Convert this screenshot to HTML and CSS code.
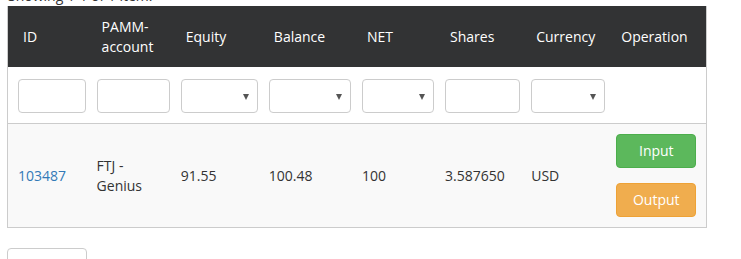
FILE: index.html
```html
<!DOCTYPE html>
<html>
<head>
<meta charset="utf-8">
<link rel="stylesheet" href="styles.css">
</head>
<body>
<div class="page">
  <div class="summary">Showing <b>1-1</b> of <b>1</b> item.</div>
  <table class="grid">
    <colgroup>
      <col class="c-id"><col class="c-pamm"><col class="c-eq"><col class="c-bal"><col class="c-net"><col class="c-sh"><col class="c-cur"><col class="c-op">
    </colgroup>
    <thead>
      <tr class="head">
        <th>ID</th><th>PAMM-account</th><th>Equity</th><th>Balance</th><th>NET</th><th>Shares</th><th>Currency</th><th>Operation</th>
      </tr>
      <tr class="filters">
        <td><div class="field"></div></td>
        <td><div class="field"></div></td>
        <td><div class="field select"><span class="caret"></span></div></td>
        <td><div class="field select"><span class="caret"></span></div></td>
        <td><div class="field select"><span class="caret"></span></div></td>
        <td><div class="field"></div></td>
        <td><div class="field select"><span class="caret"></span></div></td>
        <td></td>
      </tr>
    </thead>
    <tbody>
      <tr class="row">
        <td><a class="link" href="#">103487</a></td>
        <td>FTJ -<br>Genius</td>
        <td>91.55</td>
        <td>100.48</td>
        <td>100</td>
        <td>3.587650</td>
        <td>USD</td>
        <td>
          <div class="ops">
            <button class="btn btn-input">Input</button>
            <button class="btn btn-output">Output</button>
          </div>
        </td>
      </tr>
    </tbody>
  </table>
  <div class="after"><button class="btn btn-default"></button></div>
</div>
</body>
</html>
```
FILE: styles.css
```css
html, body {
  margin: 0;
  padding: 0;
  background: #fff;
  overflow: hidden;
}
body {
  font-family: "Open Sans", "Liberation Sans", sans-serif;
  font-size: 14px;
  line-height: 20px;
  color: #333;
}
.page {
  padding: 0 34px 0 7px;
}
.summary {
  margin-top: -14px;
  height: 20px;
  padding-left: 1px;
}
.summary b { font-weight: normal; }
.grid {
  width: 700px;
  table-layout: fixed;
  border-collapse: collapse;
  border-left: 1px solid #ccc;
  border-right: 1px solid #ccc;
  border-bottom: 1px solid #ccc;
}
.c-id { width: 79px; }
.c-pamm { width: 84px; }
.c-eq { width: 88px; }
.c-bal { width: 93px; }
.c-net { width: 83px; }
.c-sh { width: 86px; }
.c-cur { width: 85px; }
.c-op { width: 100px; }
.head th {
  background: #323334;
  color: #fff;
  font-weight: normal;
  text-align: left;
  padding: 11px 1px 10px 15px;
  vertical-align: middle;
}
.filters td {
  padding: 12px 1px 10px 10px;
  background: #fff;
  border-bottom: 1px solid #ccc;
}
.field {
  position: relative;
  height: 34px;
  box-sizing: border-box;
  border: 1px solid #ccc;
  border-radius: 4px;
  background: #fff;
}
.caret {
  position: absolute;
  right: 8px;
  top: 14px;
  width: 0;
  height: 0;
  border-left: 3.5px solid transparent;
  border-right: 3.5px solid transparent;
  border-top: 6px solid #555;
}
.row td {
  background: #f9f9f9;
  padding: 10px 1px 10px 10px;
  vertical-align: middle;
}
.link {
  color: #337ab7;
  text-decoration: none;
}
.ops {
  display: flex;
  flex-direction: column;
  gap: 15px;
}
.btn {
  display: block;
  width: 80px;
  height: 34px;
  box-sizing: border-box;
  border: 1px solid transparent;
  border-radius: 4px;
  font-family: inherit;
  font-size: 14px;
  line-height: 20px;
  color: #fff;
  padding: 6px 0;
  text-align: center;
}
.btn-input {
  background: #5cb85c;
  border-color: #4cae4c;
}
.btn-output {
  background: #f0ad4e;
  border-color: #eea236;
}
.after {
  padding-top: 20px;
}
.btn-default {
  background: #fff;
  border-color: #ccc;
}
```
